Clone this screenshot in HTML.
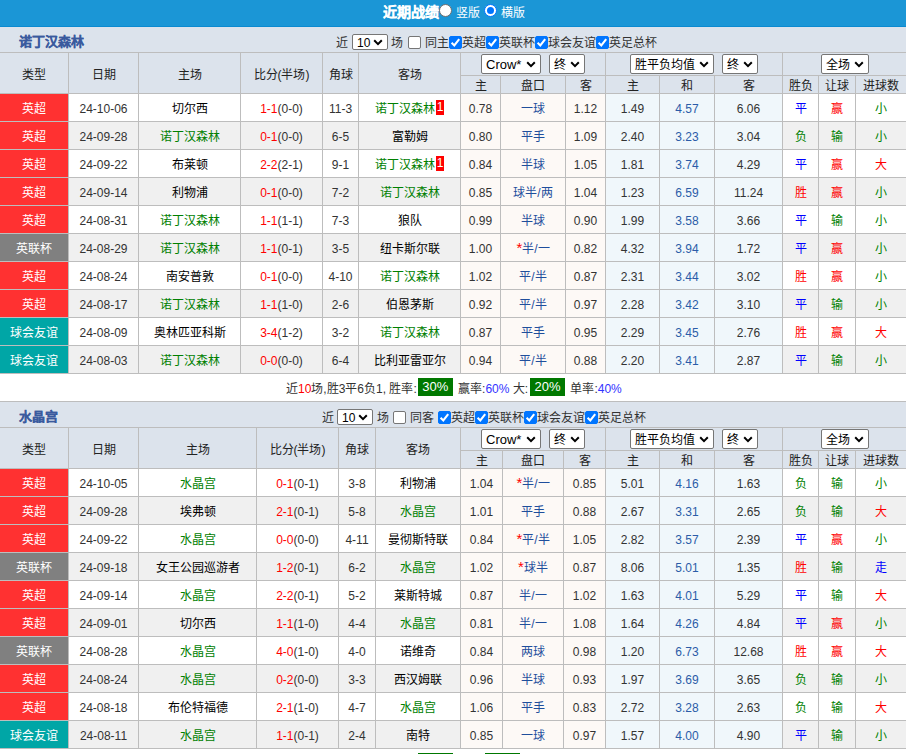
<!DOCTYPE html>
<html lang="zh-CN"><head><meta charset="utf-8"><title>近期战绩</title>
<style>
html,body{margin:0;padding:0;background:#fff;}
body{width:906px;height:754px;overflow:hidden;position:relative;font-family:"Liberation Sans", sans-serif;font-size:12px;}
body>div{position:absolute;box-sizing:border-box;}
.t{text-align:center;white-space:nowrap;}
.title{text-align:left;font-weight:bold;font-size:13px;color:#3a5a9e;-webkit-text-stroke:0.2px #3a5a9e}
.flag{display:inline-block;background:#f00;color:#fff;font-size:12px;line-height:15px;height:15px;width:8px;text-align:center;vertical-align:middle;position:relative;top:-2px;margin-left:1px}
.sel{background:#fff;border:1px solid #767676;border-radius:2px;box-sizing:content-box !important;color:#000;white-space:nowrap;text-align:left}
.sel .lab{position:absolute;left:4px;top:1px}
.sel .chev{position:absolute;right:4px;top:50%;margin-top:-3.5px}
.cb{width:13px;height:13px;background:#fff;border:1px solid #767676;border-radius:2px;}
.cb.on{background:#0075ff;border-color:#0075ff;}
.cb svg{position:absolute;left:-1px;top:-1px}
.radio{width:13px;height:13px;border-radius:50%;background:#fff;border:1px solid #6f6f6f;}
.radio.on{background:#fff;border:1px solid #0075ff;}
.radio.on div{position:absolute;left:2px;top:2px;width:7px;height:7px;border-radius:50%;background:#0075ff}
.gbox{display:inline-block;background:#007800;color:#fff;width:35px;height:18px;line-height:18px;text-align:center;font-size:13px;vertical-align:middle;margin:0 2px 0 1px;position:relative;top:-3px}
</style></head><body>
<div style="left:0px;top:0px;width:906px;height:26px;background:#1b96d6;"></div>
<div style="left:0px;top:26px;width:906px;height:1px;background:#0b8ad0;"></div>
<div class="t" style="left:383px;top:0px;height:26px;line-height:24px;color:#fff;font-weight:bold;font-size:14px;-webkit-text-stroke:0.2px #fff">近期战绩</div>
<div class="radio" style="left:439px;top:4px"></div>
<div class="t" style="left:456px;top:1px;height:26px;line-height:24px;color:#fff">竖版</div>
<div class="radio on" style="left:484px;top:4px"><div></div></div>
<div class="t" style="left:501px;top:1px;height:26px;line-height:24px;color:#fff">横版</div>
<div style="left:0px;top:27px;width:906px;height:25px;background:#dce3ec;"></div>
<div class="t title" style="left:19px;top:29px;height:25px;line-height:25px;">诺丁汉森林</div>
<div class="t" style="left:336px;top:31px;height:25px;line-height:25px;color:#333">近</div>
<div class="sel" style="left:352px;top:34px;width:34px;height:14px;line-height:14px;font-size:12px;"><span class="lab">10</span><svg class="chev" width="10" height="7" viewBox="0 0 10 7"><path d="M1.2 1.3 L5 5.1 L8.8 1.3" stroke="#000" stroke-width="2" fill="none"/></svg></div>
<div class="t" style="left:391px;top:31px;height:25px;line-height:25px;color:#333">场</div>
<div class="cb" style="left:408px;top:36px"></div>
<div class="t" style="left:425px;top:31px;height:25px;line-height:25px;color:#333">同主</div>
<div class="cb on" style="left:449px;top:36px"><svg width="13" height="13" viewBox="0 0 13 13"><path d="M2.6 6.8 L5.3 9.4 L10.2 3.2" stroke="#fff" stroke-width="2.1" fill="none"/></svg></div>
<div class="t" style="left:462px;top:31px;height:25px;line-height:25px;color:#333">英超</div>
<div class="cb on" style="left:486px;top:36px"><svg width="13" height="13" viewBox="0 0 13 13"><path d="M2.6 6.8 L5.3 9.4 L10.2 3.2" stroke="#fff" stroke-width="2.1" fill="none"/></svg></div>
<div class="t" style="left:499px;top:31px;height:25px;line-height:25px;color:#333">英联杯</div>
<div class="cb on" style="left:535px;top:36px"><svg width="13" height="13" viewBox="0 0 13 13"><path d="M2.6 6.8 L5.3 9.4 L10.2 3.2" stroke="#fff" stroke-width="2.1" fill="none"/></svg></div>
<div class="t" style="left:548px;top:31px;height:25px;line-height:25px;color:#333">球会友谊</div>
<div class="cb on" style="left:596px;top:36px"><svg width="13" height="13" viewBox="0 0 13 13"><path d="M2.6 6.8 L5.3 9.4 L10.2 3.2" stroke="#fff" stroke-width="2.1" fill="none"/></svg></div>
<div class="t" style="left:609px;top:31px;height:25px;line-height:25px;color:#333">英足总杯</div>
<div style="left:0px;top:52px;width:906px;height:41px;background:#dce3ec;"></div>
<div style="left:0px;top:94px;width:906px;height:27px;background:#ffffff;"></div>
<div style="left:461px;top:94px;width:144px;height:27px;background:#fdf9f6;"></div>
<div style="left:606px;top:94px;width:176px;height:27px;background:#f0f7fb;"></div>
<div style="left:0px;top:94px;width:68px;height:27px;background:#ff3131;"></div>
<div style="left:0px;top:122px;width:906px;height:27px;background:#f0f0f0;"></div>
<div style="left:461px;top:122px;width:144px;height:27px;background:#fdf9f6;"></div>
<div style="left:606px;top:122px;width:176px;height:27px;background:#f0f7fb;"></div>
<div style="left:0px;top:122px;width:68px;height:27px;background:#ff3131;"></div>
<div style="left:0px;top:150px;width:906px;height:27px;background:#ffffff;"></div>
<div style="left:461px;top:150px;width:144px;height:27px;background:#fdf9f6;"></div>
<div style="left:606px;top:150px;width:176px;height:27px;background:#f0f7fb;"></div>
<div style="left:0px;top:150px;width:68px;height:27px;background:#ff3131;"></div>
<div style="left:0px;top:178px;width:906px;height:27px;background:#f0f0f0;"></div>
<div style="left:461px;top:178px;width:144px;height:27px;background:#fdf9f6;"></div>
<div style="left:606px;top:178px;width:176px;height:27px;background:#f0f7fb;"></div>
<div style="left:0px;top:178px;width:68px;height:27px;background:#ff3131;"></div>
<div style="left:0px;top:206px;width:906px;height:27px;background:#ffffff;"></div>
<div style="left:461px;top:206px;width:144px;height:27px;background:#fdf9f6;"></div>
<div style="left:606px;top:206px;width:176px;height:27px;background:#f0f7fb;"></div>
<div style="left:0px;top:206px;width:68px;height:27px;background:#ff3131;"></div>
<div style="left:0px;top:234px;width:906px;height:27px;background:#f0f0f0;"></div>
<div style="left:461px;top:234px;width:144px;height:27px;background:#fdf9f6;"></div>
<div style="left:606px;top:234px;width:176px;height:27px;background:#f0f7fb;"></div>
<div style="left:0px;top:234px;width:68px;height:27px;background:#808080;"></div>
<div style="left:0px;top:262px;width:906px;height:27px;background:#ffffff;"></div>
<div style="left:461px;top:262px;width:144px;height:27px;background:#fdf9f6;"></div>
<div style="left:606px;top:262px;width:176px;height:27px;background:#f0f7fb;"></div>
<div style="left:0px;top:262px;width:68px;height:27px;background:#ff3131;"></div>
<div style="left:0px;top:290px;width:906px;height:27px;background:#f0f0f0;"></div>
<div style="left:461px;top:290px;width:144px;height:27px;background:#fdf9f6;"></div>
<div style="left:606px;top:290px;width:176px;height:27px;background:#f0f7fb;"></div>
<div style="left:0px;top:290px;width:68px;height:27px;background:#ff3131;"></div>
<div style="left:0px;top:318px;width:906px;height:27px;background:#ffffff;"></div>
<div style="left:461px;top:318px;width:144px;height:27px;background:#fdf9f6;"></div>
<div style="left:606px;top:318px;width:176px;height:27px;background:#f0f7fb;"></div>
<div style="left:0px;top:318px;width:68px;height:27px;background:#00a6a6;"></div>
<div style="left:0px;top:346px;width:906px;height:27px;background:#f0f0f0;"></div>
<div style="left:461px;top:346px;width:144px;height:27px;background:#fdf9f6;"></div>
<div style="left:606px;top:346px;width:176px;height:27px;background:#f0f7fb;"></div>
<div style="left:0px;top:346px;width:68px;height:27px;background:#00a6a6;"></div>
<div style="left:0px;top:52px;width:906px;height:1px;background:#bdbdbd;"></div>
<div style="left:460px;top:75px;width:446px;height:1px;background:#bdbdbd;"></div>
<div style="left:0px;top:93px;width:906px;height:1px;background:#bdbdbd;"></div>
<div style="left:0px;top:121px;width:906px;height:1px;background:#bdbdbd;"></div>
<div style="left:0px;top:149px;width:906px;height:1px;background:#bdbdbd;"></div>
<div style="left:0px;top:177px;width:906px;height:1px;background:#bdbdbd;"></div>
<div style="left:0px;top:205px;width:906px;height:1px;background:#bdbdbd;"></div>
<div style="left:0px;top:233px;width:906px;height:1px;background:#bdbdbd;"></div>
<div style="left:0px;top:261px;width:906px;height:1px;background:#bdbdbd;"></div>
<div style="left:0px;top:289px;width:906px;height:1px;background:#bdbdbd;"></div>
<div style="left:0px;top:317px;width:906px;height:1px;background:#bdbdbd;"></div>
<div style="left:0px;top:345px;width:906px;height:1px;background:#bdbdbd;"></div>
<div style="left:0px;top:373px;width:906px;height:1px;background:#bdbdbd;"></div>
<div style="left:68px;top:52px;width:1px;height:321px;background:#bdbdbd;"></div>
<div style="left:138px;top:52px;width:1px;height:321px;background:#bdbdbd;"></div>
<div style="left:240px;top:52px;width:1px;height:321px;background:#bdbdbd;"></div>
<div style="left:322px;top:52px;width:1px;height:321px;background:#bdbdbd;"></div>
<div style="left:358px;top:52px;width:1px;height:321px;background:#bdbdbd;"></div>
<div style="left:460px;top:52px;width:1px;height:321px;background:#bdbdbd;"></div>
<div style="left:500px;top:75px;width:1px;height:298px;background:#bdbdbd;"></div>
<div style="left:565px;top:75px;width:1px;height:298px;background:#bdbdbd;"></div>
<div style="left:605px;top:52px;width:1px;height:321px;background:#bdbdbd;"></div>
<div style="left:659px;top:75px;width:1px;height:298px;background:#bdbdbd;"></div>
<div style="left:714px;top:75px;width:1px;height:298px;background:#bdbdbd;"></div>
<div style="left:782px;top:52px;width:1px;height:321px;background:#bdbdbd;"></div>
<div style="left:818px;top:75px;width:1px;height:298px;background:#bdbdbd;"></div>
<div style="left:855px;top:75px;width:1px;height:298px;background:#bdbdbd;"></div>
<div class="t" style="left:0px;top:55px;width:68px;height:40px;line-height:40px;color:#222;">类型</div>
<div class="t" style="left:69px;top:55px;width:69px;height:40px;line-height:40px;color:#222;">日期</div>
<div class="t" style="left:139px;top:55px;width:101px;height:40px;line-height:40px;color:#222;">主场</div>
<div class="t" style="left:241px;top:55px;width:81px;height:40px;line-height:40px;color:#222;">比分(半场)</div>
<div class="t" style="left:323px;top:55px;width:35px;height:40px;line-height:40px;color:#222;">角球</div>
<div class="t" style="left:359px;top:55px;width:101px;height:40px;line-height:40px;color:#222;">客场</div>
<div class="t" style="left:461px;top:78px;width:39px;height:17px;line-height:17px;color:#222;">主</div>
<div class="t" style="left:501px;top:78px;width:64px;height:17px;line-height:17px;color:#222;">盘口</div>
<div class="t" style="left:566px;top:78px;width:39px;height:17px;line-height:17px;color:#222;">客</div>
<div class="t" style="left:606px;top:78px;width:53px;height:17px;line-height:17px;color:#222;">主</div>
<div class="t" style="left:660px;top:78px;width:54px;height:17px;line-height:17px;color:#222;">和</div>
<div class="t" style="left:715px;top:78px;width:67px;height:17px;line-height:17px;color:#222;">客</div>
<div class="t" style="left:783px;top:78px;width:35px;height:17px;line-height:17px;color:#222;">胜负</div>
<div class="t" style="left:819px;top:78px;width:36px;height:17px;line-height:17px;color:#222;">让球</div>
<div class="t" style="left:856px;top:78px;width:50px;height:17px;line-height:17px;color:#222;">进球数</div>
<div class="t" style="left:0px;top:96px;width:68px;height:27px;line-height:27px;color:#fff;">英超</div>
<div class="t" style="left:69px;top:96px;width:69px;height:27px;line-height:27px;color:#333;">24-10-06</div>
<div class="t" style="left:139px;top:96px;width:101px;height:27px;line-height:27px;color:#333;"><span style="color:#000">切尔西</span></div>
<div class="t" style="left:241px;top:96px;width:81px;height:27px;line-height:27px;color:#333;"><span style="color:#ff0000">1-1</span>(0-0)</div>
<div class="t" style="left:323px;top:96px;width:35px;height:27px;line-height:27px;color:#333;">11-3</div>
<div class="t" style="left:359px;top:96px;width:101px;height:27px;line-height:27px;color:#333;"><span style="color:#008000">诺丁汉森林</span><span class="flag">1</span></div>
<div class="t" style="left:461px;top:96px;width:39px;height:27px;line-height:27px;color:#333;">0.78</div>
<div class="t" style="left:501px;top:96px;width:64px;height:27px;line-height:27px;color:#1f4e9c;">一球</div>
<div class="t" style="left:566px;top:96px;width:39px;height:27px;line-height:27px;color:#333;">1.12</div>
<div class="t" style="left:606px;top:96px;width:53px;height:27px;line-height:27px;color:#333;">1.49</div>
<div class="t" style="left:660px;top:96px;width:54px;height:27px;line-height:27px;color:#2b5ca8;">4.57</div>
<div class="t" style="left:715px;top:96px;width:67px;height:27px;line-height:27px;color:#333;">6.06</div>
<div class="t" style="left:783px;top:96px;width:35px;height:27px;line-height:27px;color:#0000ff;">平</div>
<div class="t" style="left:819px;top:96px;width:36px;height:27px;line-height:27px;color:#ff0000;">赢</div>
<div class="t" style="left:856px;top:96px;width:50px;height:27px;line-height:27px;color:#008000;">小</div>
<div class="t" style="left:0px;top:124px;width:68px;height:27px;line-height:27px;color:#fff;">英超</div>
<div class="t" style="left:69px;top:124px;width:69px;height:27px;line-height:27px;color:#333;">24-09-28</div>
<div class="t" style="left:139px;top:124px;width:101px;height:27px;line-height:27px;color:#333;"><span style="color:#008000">诺丁汉森林</span></div>
<div class="t" style="left:241px;top:124px;width:81px;height:27px;line-height:27px;color:#333;"><span style="color:#ff0000">0-1</span>(0-0)</div>
<div class="t" style="left:323px;top:124px;width:35px;height:27px;line-height:27px;color:#333;">6-5</div>
<div class="t" style="left:359px;top:124px;width:101px;height:27px;line-height:27px;color:#333;"><span style="color:#000">富勒姆</span></div>
<div class="t" style="left:461px;top:124px;width:39px;height:27px;line-height:27px;color:#333;">0.80</div>
<div class="t" style="left:501px;top:124px;width:64px;height:27px;line-height:27px;color:#1f4e9c;">平手</div>
<div class="t" style="left:566px;top:124px;width:39px;height:27px;line-height:27px;color:#333;">1.09</div>
<div class="t" style="left:606px;top:124px;width:53px;height:27px;line-height:27px;color:#333;">2.40</div>
<div class="t" style="left:660px;top:124px;width:54px;height:27px;line-height:27px;color:#2b5ca8;">3.23</div>
<div class="t" style="left:715px;top:124px;width:67px;height:27px;line-height:27px;color:#333;">3.04</div>
<div class="t" style="left:783px;top:124px;width:35px;height:27px;line-height:27px;color:#008000;">负</div>
<div class="t" style="left:819px;top:124px;width:36px;height:27px;line-height:27px;color:#008000;">输</div>
<div class="t" style="left:856px;top:124px;width:50px;height:27px;line-height:27px;color:#008000;">小</div>
<div class="t" style="left:0px;top:152px;width:68px;height:27px;line-height:27px;color:#fff;">英超</div>
<div class="t" style="left:69px;top:152px;width:69px;height:27px;line-height:27px;color:#333;">24-09-22</div>
<div class="t" style="left:139px;top:152px;width:101px;height:27px;line-height:27px;color:#333;"><span style="color:#000">布莱顿</span></div>
<div class="t" style="left:241px;top:152px;width:81px;height:27px;line-height:27px;color:#333;"><span style="color:#ff0000">2-2</span>(2-1)</div>
<div class="t" style="left:323px;top:152px;width:35px;height:27px;line-height:27px;color:#333;">9-1</div>
<div class="t" style="left:359px;top:152px;width:101px;height:27px;line-height:27px;color:#333;"><span style="color:#008000">诺丁汉森林</span><span class="flag">1</span></div>
<div class="t" style="left:461px;top:152px;width:39px;height:27px;line-height:27px;color:#333;">0.84</div>
<div class="t" style="left:501px;top:152px;width:64px;height:27px;line-height:27px;color:#1f4e9c;">半球</div>
<div class="t" style="left:566px;top:152px;width:39px;height:27px;line-height:27px;color:#333;">1.05</div>
<div class="t" style="left:606px;top:152px;width:53px;height:27px;line-height:27px;color:#333;">1.81</div>
<div class="t" style="left:660px;top:152px;width:54px;height:27px;line-height:27px;color:#2b5ca8;">3.74</div>
<div class="t" style="left:715px;top:152px;width:67px;height:27px;line-height:27px;color:#333;">4.29</div>
<div class="t" style="left:783px;top:152px;width:35px;height:27px;line-height:27px;color:#0000ff;">平</div>
<div class="t" style="left:819px;top:152px;width:36px;height:27px;line-height:27px;color:#ff0000;">赢</div>
<div class="t" style="left:856px;top:152px;width:50px;height:27px;line-height:27px;color:#ff0000;">大</div>
<div class="t" style="left:0px;top:180px;width:68px;height:27px;line-height:27px;color:#fff;">英超</div>
<div class="t" style="left:69px;top:180px;width:69px;height:27px;line-height:27px;color:#333;">24-09-14</div>
<div class="t" style="left:139px;top:180px;width:101px;height:27px;line-height:27px;color:#333;"><span style="color:#000">利物浦</span></div>
<div class="t" style="left:241px;top:180px;width:81px;height:27px;line-height:27px;color:#333;"><span style="color:#ff0000">0-1</span>(0-0)</div>
<div class="t" style="left:323px;top:180px;width:35px;height:27px;line-height:27px;color:#333;">7-2</div>
<div class="t" style="left:359px;top:180px;width:101px;height:27px;line-height:27px;color:#333;"><span style="color:#008000">诺丁汉森林</span></div>
<div class="t" style="left:461px;top:180px;width:39px;height:27px;line-height:27px;color:#333;">0.85</div>
<div class="t" style="left:501px;top:180px;width:64px;height:27px;line-height:27px;color:#1f4e9c;">球半/两</div>
<div class="t" style="left:566px;top:180px;width:39px;height:27px;line-height:27px;color:#333;">1.04</div>
<div class="t" style="left:606px;top:180px;width:53px;height:27px;line-height:27px;color:#333;">1.23</div>
<div class="t" style="left:660px;top:180px;width:54px;height:27px;line-height:27px;color:#2b5ca8;">6.59</div>
<div class="t" style="left:715px;top:180px;width:67px;height:27px;line-height:27px;color:#333;">11.24</div>
<div class="t" style="left:783px;top:180px;width:35px;height:27px;line-height:27px;color:#ff0000;">胜</div>
<div class="t" style="left:819px;top:180px;width:36px;height:27px;line-height:27px;color:#ff0000;">赢</div>
<div class="t" style="left:856px;top:180px;width:50px;height:27px;line-height:27px;color:#008000;">小</div>
<div class="t" style="left:0px;top:208px;width:68px;height:27px;line-height:27px;color:#fff;">英超</div>
<div class="t" style="left:69px;top:208px;width:69px;height:27px;line-height:27px;color:#333;">24-08-31</div>
<div class="t" style="left:139px;top:208px;width:101px;height:27px;line-height:27px;color:#333;"><span style="color:#008000">诺丁汉森林</span></div>
<div class="t" style="left:241px;top:208px;width:81px;height:27px;line-height:27px;color:#333;"><span style="color:#ff0000">1-1</span>(1-1)</div>
<div class="t" style="left:323px;top:208px;width:35px;height:27px;line-height:27px;color:#333;">7-3</div>
<div class="t" style="left:359px;top:208px;width:101px;height:27px;line-height:27px;color:#333;"><span style="color:#000">狼队</span></div>
<div class="t" style="left:461px;top:208px;width:39px;height:27px;line-height:27px;color:#333;">0.99</div>
<div class="t" style="left:501px;top:208px;width:64px;height:27px;line-height:27px;color:#1f4e9c;">半球</div>
<div class="t" style="left:566px;top:208px;width:39px;height:27px;line-height:27px;color:#333;">0.90</div>
<div class="t" style="left:606px;top:208px;width:53px;height:27px;line-height:27px;color:#333;">1.99</div>
<div class="t" style="left:660px;top:208px;width:54px;height:27px;line-height:27px;color:#2b5ca8;">3.58</div>
<div class="t" style="left:715px;top:208px;width:67px;height:27px;line-height:27px;color:#333;">3.66</div>
<div class="t" style="left:783px;top:208px;width:35px;height:27px;line-height:27px;color:#0000ff;">平</div>
<div class="t" style="left:819px;top:208px;width:36px;height:27px;line-height:27px;color:#008000;">输</div>
<div class="t" style="left:856px;top:208px;width:50px;height:27px;line-height:27px;color:#008000;">小</div>
<div class="t" style="left:0px;top:236px;width:68px;height:27px;line-height:27px;color:#fff;">英联杯</div>
<div class="t" style="left:69px;top:236px;width:69px;height:27px;line-height:27px;color:#333;">24-08-29</div>
<div class="t" style="left:139px;top:236px;width:101px;height:27px;line-height:27px;color:#333;"><span style="color:#008000">诺丁汉森林</span></div>
<div class="t" style="left:241px;top:236px;width:81px;height:27px;line-height:27px;color:#333;"><span style="color:#ff0000">1-1</span>(0-1)</div>
<div class="t" style="left:323px;top:236px;width:35px;height:27px;line-height:27px;color:#333;">3-5</div>
<div class="t" style="left:359px;top:236px;width:101px;height:27px;line-height:27px;color:#333;"><span style="color:#000">纽卡斯尔联</span></div>
<div class="t" style="left:461px;top:236px;width:39px;height:27px;line-height:27px;color:#333;">1.00</div>
<div class="t" style="left:501px;top:236px;width:64px;height:27px;line-height:27px;color:#1f4e9c;"><span style="color:#ff0000;font-size:15px;line-height:10px">*</span>半/一</div>
<div class="t" style="left:566px;top:236px;width:39px;height:27px;line-height:27px;color:#333;">0.82</div>
<div class="t" style="left:606px;top:236px;width:53px;height:27px;line-height:27px;color:#333;">4.32</div>
<div class="t" style="left:660px;top:236px;width:54px;height:27px;line-height:27px;color:#2b5ca8;">3.94</div>
<div class="t" style="left:715px;top:236px;width:67px;height:27px;line-height:27px;color:#333;">1.72</div>
<div class="t" style="left:783px;top:236px;width:35px;height:27px;line-height:27px;color:#0000ff;">平</div>
<div class="t" style="left:819px;top:236px;width:36px;height:27px;line-height:27px;color:#ff0000;">赢</div>
<div class="t" style="left:856px;top:236px;width:50px;height:27px;line-height:27px;color:#008000;">小</div>
<div class="t" style="left:0px;top:264px;width:68px;height:27px;line-height:27px;color:#fff;">英超</div>
<div class="t" style="left:69px;top:264px;width:69px;height:27px;line-height:27px;color:#333;">24-08-24</div>
<div class="t" style="left:139px;top:264px;width:101px;height:27px;line-height:27px;color:#333;"><span style="color:#000">南安普敦</span></div>
<div class="t" style="left:241px;top:264px;width:81px;height:27px;line-height:27px;color:#333;"><span style="color:#ff0000">0-1</span>(0-0)</div>
<div class="t" style="left:323px;top:264px;width:35px;height:27px;line-height:27px;color:#333;">4-10</div>
<div class="t" style="left:359px;top:264px;width:101px;height:27px;line-height:27px;color:#333;"><span style="color:#008000">诺丁汉森林</span></div>
<div class="t" style="left:461px;top:264px;width:39px;height:27px;line-height:27px;color:#333;">1.02</div>
<div class="t" style="left:501px;top:264px;width:64px;height:27px;line-height:27px;color:#1f4e9c;">平/半</div>
<div class="t" style="left:566px;top:264px;width:39px;height:27px;line-height:27px;color:#333;">0.87</div>
<div class="t" style="left:606px;top:264px;width:53px;height:27px;line-height:27px;color:#333;">2.31</div>
<div class="t" style="left:660px;top:264px;width:54px;height:27px;line-height:27px;color:#2b5ca8;">3.44</div>
<div class="t" style="left:715px;top:264px;width:67px;height:27px;line-height:27px;color:#333;">3.02</div>
<div class="t" style="left:783px;top:264px;width:35px;height:27px;line-height:27px;color:#ff0000;">胜</div>
<div class="t" style="left:819px;top:264px;width:36px;height:27px;line-height:27px;color:#ff0000;">赢</div>
<div class="t" style="left:856px;top:264px;width:50px;height:27px;line-height:27px;color:#008000;">小</div>
<div class="t" style="left:0px;top:292px;width:68px;height:27px;line-height:27px;color:#fff;">英超</div>
<div class="t" style="left:69px;top:292px;width:69px;height:27px;line-height:27px;color:#333;">24-08-17</div>
<div class="t" style="left:139px;top:292px;width:101px;height:27px;line-height:27px;color:#333;"><span style="color:#008000">诺丁汉森林</span></div>
<div class="t" style="left:241px;top:292px;width:81px;height:27px;line-height:27px;color:#333;"><span style="color:#ff0000">1-1</span>(1-0)</div>
<div class="t" style="left:323px;top:292px;width:35px;height:27px;line-height:27px;color:#333;">2-6</div>
<div class="t" style="left:359px;top:292px;width:101px;height:27px;line-height:27px;color:#333;"><span style="color:#000">伯恩茅斯</span></div>
<div class="t" style="left:461px;top:292px;width:39px;height:27px;line-height:27px;color:#333;">0.92</div>
<div class="t" style="left:501px;top:292px;width:64px;height:27px;line-height:27px;color:#1f4e9c;">平/半</div>
<div class="t" style="left:566px;top:292px;width:39px;height:27px;line-height:27px;color:#333;">0.97</div>
<div class="t" style="left:606px;top:292px;width:53px;height:27px;line-height:27px;color:#333;">2.28</div>
<div class="t" style="left:660px;top:292px;width:54px;height:27px;line-height:27px;color:#2b5ca8;">3.42</div>
<div class="t" style="left:715px;top:292px;width:67px;height:27px;line-height:27px;color:#333;">3.10</div>
<div class="t" style="left:783px;top:292px;width:35px;height:27px;line-height:27px;color:#0000ff;">平</div>
<div class="t" style="left:819px;top:292px;width:36px;height:27px;line-height:27px;color:#008000;">输</div>
<div class="t" style="left:856px;top:292px;width:50px;height:27px;line-height:27px;color:#008000;">小</div>
<div class="t" style="left:0px;top:320px;width:68px;height:27px;line-height:27px;color:#fff;">球会友谊</div>
<div class="t" style="left:69px;top:320px;width:69px;height:27px;line-height:27px;color:#333;">24-08-09</div>
<div class="t" style="left:139px;top:320px;width:101px;height:27px;line-height:27px;color:#333;"><span style="color:#000">奥林匹亚科斯</span></div>
<div class="t" style="left:241px;top:320px;width:81px;height:27px;line-height:27px;color:#333;"><span style="color:#ff0000">3-4</span>(1-2)</div>
<div class="t" style="left:323px;top:320px;width:35px;height:27px;line-height:27px;color:#333;">3-2</div>
<div class="t" style="left:359px;top:320px;width:101px;height:27px;line-height:27px;color:#333;"><span style="color:#008000">诺丁汉森林</span></div>
<div class="t" style="left:461px;top:320px;width:39px;height:27px;line-height:27px;color:#333;">0.87</div>
<div class="t" style="left:501px;top:320px;width:64px;height:27px;line-height:27px;color:#1f4e9c;">平手</div>
<div class="t" style="left:566px;top:320px;width:39px;height:27px;line-height:27px;color:#333;">0.95</div>
<div class="t" style="left:606px;top:320px;width:53px;height:27px;line-height:27px;color:#333;">2.29</div>
<div class="t" style="left:660px;top:320px;width:54px;height:27px;line-height:27px;color:#2b5ca8;">3.45</div>
<div class="t" style="left:715px;top:320px;width:67px;height:27px;line-height:27px;color:#333;">2.76</div>
<div class="t" style="left:783px;top:320px;width:35px;height:27px;line-height:27px;color:#ff0000;">胜</div>
<div class="t" style="left:819px;top:320px;width:36px;height:27px;line-height:27px;color:#ff0000;">赢</div>
<div class="t" style="left:856px;top:320px;width:50px;height:27px;line-height:27px;color:#ff0000;">大</div>
<div class="t" style="left:0px;top:348px;width:68px;height:27px;line-height:27px;color:#fff;">球会友谊</div>
<div class="t" style="left:69px;top:348px;width:69px;height:27px;line-height:27px;color:#333;">24-08-03</div>
<div class="t" style="left:139px;top:348px;width:101px;height:27px;line-height:27px;color:#333;"><span style="color:#008000">诺丁汉森林</span></div>
<div class="t" style="left:241px;top:348px;width:81px;height:27px;line-height:27px;color:#333;"><span style="color:#ff0000">0-0</span>(0-0)</div>
<div class="t" style="left:323px;top:348px;width:35px;height:27px;line-height:27px;color:#333;">6-4</div>
<div class="t" style="left:359px;top:348px;width:101px;height:27px;line-height:27px;color:#333;"><span style="color:#000">比利亚雷亚尔</span></div>
<div class="t" style="left:461px;top:348px;width:39px;height:27px;line-height:27px;color:#333;">0.94</div>
<div class="t" style="left:501px;top:348px;width:64px;height:27px;line-height:27px;color:#1f4e9c;">平/半</div>
<div class="t" style="left:566px;top:348px;width:39px;height:27px;line-height:27px;color:#333;">0.88</div>
<div class="t" style="left:606px;top:348px;width:53px;height:27px;line-height:27px;color:#333;">2.20</div>
<div class="t" style="left:660px;top:348px;width:54px;height:27px;line-height:27px;color:#2b5ca8;">3.41</div>
<div class="t" style="left:715px;top:348px;width:67px;height:27px;line-height:27px;color:#333;">2.87</div>
<div class="t" style="left:783px;top:348px;width:35px;height:27px;line-height:27px;color:#0000ff;">平</div>
<div class="t" style="left:819px;top:348px;width:36px;height:27px;line-height:27px;color:#008000;">输</div>
<div class="t" style="left:856px;top:348px;width:50px;height:27px;line-height:27px;color:#008000;">小</div>
<div class="sel" style="left:481px;top:54px;width:58px;height:18px;line-height:18px;font-size:13px;"><span class="lab">Crow*</span><svg class="chev" width="10" height="7" viewBox="0 0 10 7"><path d="M1.2 1.3 L5 5.1 L8.8 1.3" stroke="#000" stroke-width="2" fill="none"/></svg></div>
<div class="sel" style="left:549px;top:54px;width:34px;height:18px;line-height:18px;font-size:12px;"><span class="lab">终</span><svg class="chev" width="10" height="7" viewBox="0 0 10 7"><path d="M1.2 1.3 L5 5.1 L8.8 1.3" stroke="#000" stroke-width="2" fill="none"/></svg></div>
<div class="sel" style="left:630px;top:54px;width:82px;height:18px;line-height:18px;font-size:12px;"><span class="lab">胜平负均值</span><svg class="chev" width="10" height="7" viewBox="0 0 10 7"><path d="M1.2 1.3 L5 5.1 L8.8 1.3" stroke="#000" stroke-width="2" fill="none"/></svg></div>
<div class="sel" style="left:722px;top:54px;width:34px;height:18px;line-height:18px;font-size:12px;"><span class="lab">终</span><svg class="chev" width="10" height="7" viewBox="0 0 10 7"><path d="M1.2 1.3 L5 5.1 L8.8 1.3" stroke="#000" stroke-width="2" fill="none"/></svg></div>
<div class="sel" style="left:821px;top:54px;width:46px;height:18px;line-height:18px;font-size:12px;"><span class="lab">全场</span><svg class="chev" width="10" height="7" viewBox="0 0 10 7"><path d="M1.2 1.3 L5 5.1 L8.8 1.3" stroke="#000" stroke-width="2" fill="none"/></svg></div>
<div class="t" style="left:286px;top:376px;height:27px;line-height:27px;color:#333">近<span style="color:#f00">10</span>场,胜3平6负1, 胜率:<span class="gbox">30%</span> 赢率:<span style="color:#3333ff">60%</span> 大:<span class="gbox" style="margin-left:2px">20%</span> 单率:<span style="color:#3333ff">40%</span></div>
<div style="left:0px;top:401px;width:906px;height:1px;background:#bdbdbd;"></div>
<div style="left:0px;top:402px;width:906px;height:25px;background:#dce3ec;"></div>
<div class="t title" style="left:19px;top:404px;height:25px;line-height:25px;">水晶宫</div>
<div class="t" style="left:322px;top:406px;height:25px;line-height:25px;color:#333">近</div>
<div class="sel" style="left:337px;top:409px;width:34px;height:14px;line-height:14px;font-size:12px;"><span class="lab">10</span><svg class="chev" width="10" height="7" viewBox="0 0 10 7"><path d="M1.2 1.3 L5 5.1 L8.8 1.3" stroke="#000" stroke-width="2" fill="none"/></svg></div>
<div class="t" style="left:377px;top:406px;height:25px;line-height:25px;color:#333">场</div>
<div class="cb" style="left:393px;top:411px"></div>
<div class="t" style="left:410px;top:406px;height:25px;line-height:25px;color:#333">同客</div>
<div class="cb on" style="left:438px;top:411px"><svg width="13" height="13" viewBox="0 0 13 13"><path d="M2.6 6.8 L5.3 9.4 L10.2 3.2" stroke="#fff" stroke-width="2.1" fill="none"/></svg></div>
<div class="t" style="left:451px;top:406px;height:25px;line-height:25px;color:#333">英超</div>
<div class="cb on" style="left:475px;top:411px"><svg width="13" height="13" viewBox="0 0 13 13"><path d="M2.6 6.8 L5.3 9.4 L10.2 3.2" stroke="#fff" stroke-width="2.1" fill="none"/></svg></div>
<div class="t" style="left:488px;top:406px;height:25px;line-height:25px;color:#333">英联杯</div>
<div class="cb on" style="left:524px;top:411px"><svg width="13" height="13" viewBox="0 0 13 13"><path d="M2.6 6.8 L5.3 9.4 L10.2 3.2" stroke="#fff" stroke-width="2.1" fill="none"/></svg></div>
<div class="t" style="left:537px;top:406px;height:25px;line-height:25px;color:#333">球会友谊</div>
<div class="cb on" style="left:585px;top:411px"><svg width="13" height="13" viewBox="0 0 13 13"><path d="M2.6 6.8 L5.3 9.4 L10.2 3.2" stroke="#fff" stroke-width="2.1" fill="none"/></svg></div>
<div class="t" style="left:598px;top:406px;height:25px;line-height:25px;color:#333">英足总杯</div>
<div style="left:0px;top:427px;width:906px;height:41px;background:#dce3ec;"></div>
<div style="left:0px;top:469px;width:906px;height:27px;background:#ffffff;"></div>
<div style="left:461px;top:469px;width:144px;height:27px;background:#fdf9f6;"></div>
<div style="left:606px;top:469px;width:176px;height:27px;background:#f0f7fb;"></div>
<div style="left:0px;top:469px;width:68px;height:27px;background:#ff3131;"></div>
<div style="left:0px;top:497px;width:906px;height:27px;background:#f0f0f0;"></div>
<div style="left:461px;top:497px;width:144px;height:27px;background:#fdf9f6;"></div>
<div style="left:606px;top:497px;width:176px;height:27px;background:#f0f7fb;"></div>
<div style="left:0px;top:497px;width:68px;height:27px;background:#ff3131;"></div>
<div style="left:0px;top:525px;width:906px;height:27px;background:#ffffff;"></div>
<div style="left:461px;top:525px;width:144px;height:27px;background:#fdf9f6;"></div>
<div style="left:606px;top:525px;width:176px;height:27px;background:#f0f7fb;"></div>
<div style="left:0px;top:525px;width:68px;height:27px;background:#ff3131;"></div>
<div style="left:0px;top:553px;width:906px;height:27px;background:#f0f0f0;"></div>
<div style="left:461px;top:553px;width:144px;height:27px;background:#fdf9f6;"></div>
<div style="left:606px;top:553px;width:176px;height:27px;background:#f0f7fb;"></div>
<div style="left:0px;top:553px;width:68px;height:27px;background:#808080;"></div>
<div style="left:0px;top:581px;width:906px;height:27px;background:#ffffff;"></div>
<div style="left:461px;top:581px;width:144px;height:27px;background:#fdf9f6;"></div>
<div style="left:606px;top:581px;width:176px;height:27px;background:#f0f7fb;"></div>
<div style="left:0px;top:581px;width:68px;height:27px;background:#ff3131;"></div>
<div style="left:0px;top:609px;width:906px;height:27px;background:#f0f0f0;"></div>
<div style="left:461px;top:609px;width:144px;height:27px;background:#fdf9f6;"></div>
<div style="left:606px;top:609px;width:176px;height:27px;background:#f0f7fb;"></div>
<div style="left:0px;top:609px;width:68px;height:27px;background:#ff3131;"></div>
<div style="left:0px;top:637px;width:906px;height:27px;background:#ffffff;"></div>
<div style="left:461px;top:637px;width:144px;height:27px;background:#fdf9f6;"></div>
<div style="left:606px;top:637px;width:176px;height:27px;background:#f0f7fb;"></div>
<div style="left:0px;top:637px;width:68px;height:27px;background:#808080;"></div>
<div style="left:0px;top:665px;width:906px;height:27px;background:#f0f0f0;"></div>
<div style="left:461px;top:665px;width:144px;height:27px;background:#fdf9f6;"></div>
<div style="left:606px;top:665px;width:176px;height:27px;background:#f0f7fb;"></div>
<div style="left:0px;top:665px;width:68px;height:27px;background:#ff3131;"></div>
<div style="left:0px;top:693px;width:906px;height:27px;background:#ffffff;"></div>
<div style="left:461px;top:693px;width:144px;height:27px;background:#fdf9f6;"></div>
<div style="left:606px;top:693px;width:176px;height:27px;background:#f0f7fb;"></div>
<div style="left:0px;top:693px;width:68px;height:27px;background:#ff3131;"></div>
<div style="left:0px;top:721px;width:906px;height:27px;background:#f0f0f0;"></div>
<div style="left:461px;top:721px;width:144px;height:27px;background:#fdf9f6;"></div>
<div style="left:606px;top:721px;width:176px;height:27px;background:#f0f7fb;"></div>
<div style="left:0px;top:721px;width:68px;height:27px;background:#00a6a6;"></div>
<div style="left:0px;top:427px;width:906px;height:1px;background:#bdbdbd;"></div>
<div style="left:460px;top:450px;width:446px;height:1px;background:#bdbdbd;"></div>
<div style="left:0px;top:468px;width:906px;height:1px;background:#bdbdbd;"></div>
<div style="left:0px;top:496px;width:906px;height:1px;background:#bdbdbd;"></div>
<div style="left:0px;top:524px;width:906px;height:1px;background:#bdbdbd;"></div>
<div style="left:0px;top:552px;width:906px;height:1px;background:#bdbdbd;"></div>
<div style="left:0px;top:580px;width:906px;height:1px;background:#bdbdbd;"></div>
<div style="left:0px;top:608px;width:906px;height:1px;background:#bdbdbd;"></div>
<div style="left:0px;top:636px;width:906px;height:1px;background:#bdbdbd;"></div>
<div style="left:0px;top:664px;width:906px;height:1px;background:#bdbdbd;"></div>
<div style="left:0px;top:692px;width:906px;height:1px;background:#bdbdbd;"></div>
<div style="left:0px;top:720px;width:906px;height:1px;background:#bdbdbd;"></div>
<div style="left:0px;top:748px;width:906px;height:1px;background:#bdbdbd;"></div>
<div style="left:68px;top:427px;width:1px;height:321px;background:#bdbdbd;"></div>
<div style="left:138px;top:427px;width:1px;height:321px;background:#bdbdbd;"></div>
<div style="left:256px;top:427px;width:1px;height:321px;background:#bdbdbd;"></div>
<div style="left:338px;top:427px;width:1px;height:321px;background:#bdbdbd;"></div>
<div style="left:375px;top:427px;width:1px;height:321px;background:#bdbdbd;"></div>
<div style="left:460px;top:427px;width:1px;height:321px;background:#bdbdbd;"></div>
<div style="left:502px;top:450px;width:1px;height:298px;background:#bdbdbd;"></div>
<div style="left:563px;top:450px;width:1px;height:298px;background:#bdbdbd;"></div>
<div style="left:605px;top:427px;width:1px;height:321px;background:#bdbdbd;"></div>
<div style="left:659px;top:450px;width:1px;height:298px;background:#bdbdbd;"></div>
<div style="left:714px;top:450px;width:1px;height:298px;background:#bdbdbd;"></div>
<div style="left:782px;top:427px;width:1px;height:321px;background:#bdbdbd;"></div>
<div style="left:818px;top:450px;width:1px;height:298px;background:#bdbdbd;"></div>
<div style="left:855px;top:450px;width:1px;height:298px;background:#bdbdbd;"></div>
<div class="t" style="left:0px;top:430px;width:68px;height:40px;line-height:40px;color:#222;">类型</div>
<div class="t" style="left:69px;top:430px;width:69px;height:40px;line-height:40px;color:#222;">日期</div>
<div class="t" style="left:139px;top:430px;width:117px;height:40px;line-height:40px;color:#222;">主场</div>
<div class="t" style="left:257px;top:430px;width:81px;height:40px;line-height:40px;color:#222;">比分(半场)</div>
<div class="t" style="left:339px;top:430px;width:36px;height:40px;line-height:40px;color:#222;">角球</div>
<div class="t" style="left:376px;top:430px;width:84px;height:40px;line-height:40px;color:#222;">客场</div>
<div class="t" style="left:461px;top:453px;width:41px;height:17px;line-height:17px;color:#222;">主</div>
<div class="t" style="left:503px;top:453px;width:60px;height:17px;line-height:17px;color:#222;">盘口</div>
<div class="t" style="left:564px;top:453px;width:41px;height:17px;line-height:17px;color:#222;">客</div>
<div class="t" style="left:606px;top:453px;width:53px;height:17px;line-height:17px;color:#222;">主</div>
<div class="t" style="left:660px;top:453px;width:54px;height:17px;line-height:17px;color:#222;">和</div>
<div class="t" style="left:715px;top:453px;width:67px;height:17px;line-height:17px;color:#222;">客</div>
<div class="t" style="left:783px;top:453px;width:35px;height:17px;line-height:17px;color:#222;">胜负</div>
<div class="t" style="left:819px;top:453px;width:36px;height:17px;line-height:17px;color:#222;">让球</div>
<div class="t" style="left:856px;top:453px;width:50px;height:17px;line-height:17px;color:#222;">进球数</div>
<div class="t" style="left:0px;top:471px;width:68px;height:27px;line-height:27px;color:#fff;">英超</div>
<div class="t" style="left:69px;top:471px;width:69px;height:27px;line-height:27px;color:#333;">24-10-05</div>
<div class="t" style="left:139px;top:471px;width:117px;height:27px;line-height:27px;color:#333;"><span style="color:#008000">水晶宫</span></div>
<div class="t" style="left:257px;top:471px;width:81px;height:27px;line-height:27px;color:#333;"><span style="color:#ff0000">0-1</span>(0-1)</div>
<div class="t" style="left:339px;top:471px;width:36px;height:27px;line-height:27px;color:#333;">3-8</div>
<div class="t" style="left:376px;top:471px;width:84px;height:27px;line-height:27px;color:#333;"><span style="color:#000">利物浦</span></div>
<div class="t" style="left:461px;top:471px;width:41px;height:27px;line-height:27px;color:#333;">1.04</div>
<div class="t" style="left:503px;top:471px;width:60px;height:27px;line-height:27px;color:#1f4e9c;"><span style="color:#ff0000;font-size:15px;line-height:10px">*</span>半/一</div>
<div class="t" style="left:564px;top:471px;width:41px;height:27px;line-height:27px;color:#333;">0.85</div>
<div class="t" style="left:606px;top:471px;width:53px;height:27px;line-height:27px;color:#333;">5.01</div>
<div class="t" style="left:660px;top:471px;width:54px;height:27px;line-height:27px;color:#2b5ca8;">4.16</div>
<div class="t" style="left:715px;top:471px;width:67px;height:27px;line-height:27px;color:#333;">1.63</div>
<div class="t" style="left:783px;top:471px;width:35px;height:27px;line-height:27px;color:#008000;">负</div>
<div class="t" style="left:819px;top:471px;width:36px;height:27px;line-height:27px;color:#008000;">输</div>
<div class="t" style="left:856px;top:471px;width:50px;height:27px;line-height:27px;color:#008000;">小</div>
<div class="t" style="left:0px;top:499px;width:68px;height:27px;line-height:27px;color:#fff;">英超</div>
<div class="t" style="left:69px;top:499px;width:69px;height:27px;line-height:27px;color:#333;">24-09-28</div>
<div class="t" style="left:139px;top:499px;width:117px;height:27px;line-height:27px;color:#333;"><span style="color:#000">埃弗顿</span></div>
<div class="t" style="left:257px;top:499px;width:81px;height:27px;line-height:27px;color:#333;"><span style="color:#ff0000">2-1</span>(0-1)</div>
<div class="t" style="left:339px;top:499px;width:36px;height:27px;line-height:27px;color:#333;">5-8</div>
<div class="t" style="left:376px;top:499px;width:84px;height:27px;line-height:27px;color:#333;"><span style="color:#008000">水晶宫</span></div>
<div class="t" style="left:461px;top:499px;width:41px;height:27px;line-height:27px;color:#333;">1.01</div>
<div class="t" style="left:503px;top:499px;width:60px;height:27px;line-height:27px;color:#1f4e9c;">平手</div>
<div class="t" style="left:564px;top:499px;width:41px;height:27px;line-height:27px;color:#333;">0.88</div>
<div class="t" style="left:606px;top:499px;width:53px;height:27px;line-height:27px;color:#333;">2.67</div>
<div class="t" style="left:660px;top:499px;width:54px;height:27px;line-height:27px;color:#2b5ca8;">3.31</div>
<div class="t" style="left:715px;top:499px;width:67px;height:27px;line-height:27px;color:#333;">2.65</div>
<div class="t" style="left:783px;top:499px;width:35px;height:27px;line-height:27px;color:#008000;">负</div>
<div class="t" style="left:819px;top:499px;width:36px;height:27px;line-height:27px;color:#008000;">输</div>
<div class="t" style="left:856px;top:499px;width:50px;height:27px;line-height:27px;color:#ff0000;">大</div>
<div class="t" style="left:0px;top:527px;width:68px;height:27px;line-height:27px;color:#fff;">英超</div>
<div class="t" style="left:69px;top:527px;width:69px;height:27px;line-height:27px;color:#333;">24-09-22</div>
<div class="t" style="left:139px;top:527px;width:117px;height:27px;line-height:27px;color:#333;"><span style="color:#008000">水晶宫</span></div>
<div class="t" style="left:257px;top:527px;width:81px;height:27px;line-height:27px;color:#333;"><span style="color:#ff0000">0-0</span>(0-0)</div>
<div class="t" style="left:339px;top:527px;width:36px;height:27px;line-height:27px;color:#333;">4-11</div>
<div class="t" style="left:376px;top:527px;width:84px;height:27px;line-height:27px;color:#333;"><span style="color:#000">曼彻斯特联</span></div>
<div class="t" style="left:461px;top:527px;width:41px;height:27px;line-height:27px;color:#333;">0.84</div>
<div class="t" style="left:503px;top:527px;width:60px;height:27px;line-height:27px;color:#1f4e9c;"><span style="color:#ff0000;font-size:15px;line-height:10px">*</span>平/半</div>
<div class="t" style="left:564px;top:527px;width:41px;height:27px;line-height:27px;color:#333;">1.05</div>
<div class="t" style="left:606px;top:527px;width:53px;height:27px;line-height:27px;color:#333;">2.82</div>
<div class="t" style="left:660px;top:527px;width:54px;height:27px;line-height:27px;color:#2b5ca8;">3.57</div>
<div class="t" style="left:715px;top:527px;width:67px;height:27px;line-height:27px;color:#333;">2.39</div>
<div class="t" style="left:783px;top:527px;width:35px;height:27px;line-height:27px;color:#0000ff;">平</div>
<div class="t" style="left:819px;top:527px;width:36px;height:27px;line-height:27px;color:#ff0000;">赢</div>
<div class="t" style="left:856px;top:527px;width:50px;height:27px;line-height:27px;color:#008000;">小</div>
<div class="t" style="left:0px;top:555px;width:68px;height:27px;line-height:27px;color:#fff;">英联杯</div>
<div class="t" style="left:69px;top:555px;width:69px;height:27px;line-height:27px;color:#333;">24-09-18</div>
<div class="t" style="left:139px;top:555px;width:117px;height:27px;line-height:27px;color:#333;"><span style="color:#000">女王公园巡游者</span></div>
<div class="t" style="left:257px;top:555px;width:81px;height:27px;line-height:27px;color:#333;"><span style="color:#ff0000">1-2</span>(0-1)</div>
<div class="t" style="left:339px;top:555px;width:36px;height:27px;line-height:27px;color:#333;">6-2</div>
<div class="t" style="left:376px;top:555px;width:84px;height:27px;line-height:27px;color:#333;"><span style="color:#008000">水晶宫</span></div>
<div class="t" style="left:461px;top:555px;width:41px;height:27px;line-height:27px;color:#333;">1.02</div>
<div class="t" style="left:503px;top:555px;width:60px;height:27px;line-height:27px;color:#1f4e9c;"><span style="color:#ff0000;font-size:15px;line-height:10px">*</span>球半</div>
<div class="t" style="left:564px;top:555px;width:41px;height:27px;line-height:27px;color:#333;">0.87</div>
<div class="t" style="left:606px;top:555px;width:53px;height:27px;line-height:27px;color:#333;">8.06</div>
<div class="t" style="left:660px;top:555px;width:54px;height:27px;line-height:27px;color:#2b5ca8;">5.01</div>
<div class="t" style="left:715px;top:555px;width:67px;height:27px;line-height:27px;color:#333;">1.35</div>
<div class="t" style="left:783px;top:555px;width:35px;height:27px;line-height:27px;color:#ff0000;">胜</div>
<div class="t" style="left:819px;top:555px;width:36px;height:27px;line-height:27px;color:#008000;">输</div>
<div class="t" style="left:856px;top:555px;width:50px;height:27px;line-height:27px;color:#0000ff;">走</div>
<div class="t" style="left:0px;top:583px;width:68px;height:27px;line-height:27px;color:#fff;">英超</div>
<div class="t" style="left:69px;top:583px;width:69px;height:27px;line-height:27px;color:#333;">24-09-14</div>
<div class="t" style="left:139px;top:583px;width:117px;height:27px;line-height:27px;color:#333;"><span style="color:#008000">水晶宫</span></div>
<div class="t" style="left:257px;top:583px;width:81px;height:27px;line-height:27px;color:#333;"><span style="color:#ff0000">2-2</span>(0-1)</div>
<div class="t" style="left:339px;top:583px;width:36px;height:27px;line-height:27px;color:#333;">5-2</div>
<div class="t" style="left:376px;top:583px;width:84px;height:27px;line-height:27px;color:#333;"><span style="color:#000">莱斯特城</span></div>
<div class="t" style="left:461px;top:583px;width:41px;height:27px;line-height:27px;color:#333;">0.87</div>
<div class="t" style="left:503px;top:583px;width:60px;height:27px;line-height:27px;color:#1f4e9c;">半/一</div>
<div class="t" style="left:564px;top:583px;width:41px;height:27px;line-height:27px;color:#333;">1.02</div>
<div class="t" style="left:606px;top:583px;width:53px;height:27px;line-height:27px;color:#333;">1.63</div>
<div class="t" style="left:660px;top:583px;width:54px;height:27px;line-height:27px;color:#2b5ca8;">4.01</div>
<div class="t" style="left:715px;top:583px;width:67px;height:27px;line-height:27px;color:#333;">5.29</div>
<div class="t" style="left:783px;top:583px;width:35px;height:27px;line-height:27px;color:#0000ff;">平</div>
<div class="t" style="left:819px;top:583px;width:36px;height:27px;line-height:27px;color:#008000;">输</div>
<div class="t" style="left:856px;top:583px;width:50px;height:27px;line-height:27px;color:#ff0000;">大</div>
<div class="t" style="left:0px;top:611px;width:68px;height:27px;line-height:27px;color:#fff;">英超</div>
<div class="t" style="left:69px;top:611px;width:69px;height:27px;line-height:27px;color:#333;">24-09-01</div>
<div class="t" style="left:139px;top:611px;width:117px;height:27px;line-height:27px;color:#333;"><span style="color:#000">切尔西</span></div>
<div class="t" style="left:257px;top:611px;width:81px;height:27px;line-height:27px;color:#333;"><span style="color:#ff0000">1-1</span>(1-0)</div>
<div class="t" style="left:339px;top:611px;width:36px;height:27px;line-height:27px;color:#333;">4-4</div>
<div class="t" style="left:376px;top:611px;width:84px;height:27px;line-height:27px;color:#333;"><span style="color:#008000">水晶宫</span></div>
<div class="t" style="left:461px;top:611px;width:41px;height:27px;line-height:27px;color:#333;">0.81</div>
<div class="t" style="left:503px;top:611px;width:60px;height:27px;line-height:27px;color:#1f4e9c;">半/一</div>
<div class="t" style="left:564px;top:611px;width:41px;height:27px;line-height:27px;color:#333;">1.08</div>
<div class="t" style="left:606px;top:611px;width:53px;height:27px;line-height:27px;color:#333;">1.64</div>
<div class="t" style="left:660px;top:611px;width:54px;height:27px;line-height:27px;color:#2b5ca8;">4.26</div>
<div class="t" style="left:715px;top:611px;width:67px;height:27px;line-height:27px;color:#333;">4.84</div>
<div class="t" style="left:783px;top:611px;width:35px;height:27px;line-height:27px;color:#0000ff;">平</div>
<div class="t" style="left:819px;top:611px;width:36px;height:27px;line-height:27px;color:#ff0000;">赢</div>
<div class="t" style="left:856px;top:611px;width:50px;height:27px;line-height:27px;color:#008000;">小</div>
<div class="t" style="left:0px;top:639px;width:68px;height:27px;line-height:27px;color:#fff;">英联杯</div>
<div class="t" style="left:69px;top:639px;width:69px;height:27px;line-height:27px;color:#333;">24-08-28</div>
<div class="t" style="left:139px;top:639px;width:117px;height:27px;line-height:27px;color:#333;"><span style="color:#008000">水晶宫</span></div>
<div class="t" style="left:257px;top:639px;width:81px;height:27px;line-height:27px;color:#333;"><span style="color:#ff0000">4-0</span>(1-0)</div>
<div class="t" style="left:339px;top:639px;width:36px;height:27px;line-height:27px;color:#333;">4-0</div>
<div class="t" style="left:376px;top:639px;width:84px;height:27px;line-height:27px;color:#333;"><span style="color:#000">诺维奇</span></div>
<div class="t" style="left:461px;top:639px;width:41px;height:27px;line-height:27px;color:#333;">0.84</div>
<div class="t" style="left:503px;top:639px;width:60px;height:27px;line-height:27px;color:#1f4e9c;">两球</div>
<div class="t" style="left:564px;top:639px;width:41px;height:27px;line-height:27px;color:#333;">0.98</div>
<div class="t" style="left:606px;top:639px;width:53px;height:27px;line-height:27px;color:#333;">1.20</div>
<div class="t" style="left:660px;top:639px;width:54px;height:27px;line-height:27px;color:#2b5ca8;">6.73</div>
<div class="t" style="left:715px;top:639px;width:67px;height:27px;line-height:27px;color:#333;">12.68</div>
<div class="t" style="left:783px;top:639px;width:35px;height:27px;line-height:27px;color:#ff0000;">胜</div>
<div class="t" style="left:819px;top:639px;width:36px;height:27px;line-height:27px;color:#ff0000;">赢</div>
<div class="t" style="left:856px;top:639px;width:50px;height:27px;line-height:27px;color:#ff0000;">大</div>
<div class="t" style="left:0px;top:667px;width:68px;height:27px;line-height:27px;color:#fff;">英超</div>
<div class="t" style="left:69px;top:667px;width:69px;height:27px;line-height:27px;color:#333;">24-08-24</div>
<div class="t" style="left:139px;top:667px;width:117px;height:27px;line-height:27px;color:#333;"><span style="color:#008000">水晶宫</span></div>
<div class="t" style="left:257px;top:667px;width:81px;height:27px;line-height:27px;color:#333;"><span style="color:#ff0000">0-2</span>(0-0)</div>
<div class="t" style="left:339px;top:667px;width:36px;height:27px;line-height:27px;color:#333;">3-3</div>
<div class="t" style="left:376px;top:667px;width:84px;height:27px;line-height:27px;color:#333;"><span style="color:#000">西汉姆联</span></div>
<div class="t" style="left:461px;top:667px;width:41px;height:27px;line-height:27px;color:#333;">0.96</div>
<div class="t" style="left:503px;top:667px;width:60px;height:27px;line-height:27px;color:#1f4e9c;">半球</div>
<div class="t" style="left:564px;top:667px;width:41px;height:27px;line-height:27px;color:#333;">0.93</div>
<div class="t" style="left:606px;top:667px;width:53px;height:27px;line-height:27px;color:#333;">1.97</div>
<div class="t" style="left:660px;top:667px;width:54px;height:27px;line-height:27px;color:#2b5ca8;">3.69</div>
<div class="t" style="left:715px;top:667px;width:67px;height:27px;line-height:27px;color:#333;">3.65</div>
<div class="t" style="left:783px;top:667px;width:35px;height:27px;line-height:27px;color:#008000;">负</div>
<div class="t" style="left:819px;top:667px;width:36px;height:27px;line-height:27px;color:#008000;">输</div>
<div class="t" style="left:856px;top:667px;width:50px;height:27px;line-height:27px;color:#008000;">小</div>
<div class="t" style="left:0px;top:695px;width:68px;height:27px;line-height:27px;color:#fff;">英超</div>
<div class="t" style="left:69px;top:695px;width:69px;height:27px;line-height:27px;color:#333;">24-08-18</div>
<div class="t" style="left:139px;top:695px;width:117px;height:27px;line-height:27px;color:#333;"><span style="color:#000">布伦特福德</span></div>
<div class="t" style="left:257px;top:695px;width:81px;height:27px;line-height:27px;color:#333;"><span style="color:#ff0000">2-1</span>(1-0)</div>
<div class="t" style="left:339px;top:695px;width:36px;height:27px;line-height:27px;color:#333;">4-7</div>
<div class="t" style="left:376px;top:695px;width:84px;height:27px;line-height:27px;color:#333;"><span style="color:#008000">水晶宫</span></div>
<div class="t" style="left:461px;top:695px;width:41px;height:27px;line-height:27px;color:#333;">1.06</div>
<div class="t" style="left:503px;top:695px;width:60px;height:27px;line-height:27px;color:#1f4e9c;">平手</div>
<div class="t" style="left:564px;top:695px;width:41px;height:27px;line-height:27px;color:#333;">0.83</div>
<div class="t" style="left:606px;top:695px;width:53px;height:27px;line-height:27px;color:#333;">2.72</div>
<div class="t" style="left:660px;top:695px;width:54px;height:27px;line-height:27px;color:#2b5ca8;">3.28</div>
<div class="t" style="left:715px;top:695px;width:67px;height:27px;line-height:27px;color:#333;">2.63</div>
<div class="t" style="left:783px;top:695px;width:35px;height:27px;line-height:27px;color:#008000;">负</div>
<div class="t" style="left:819px;top:695px;width:36px;height:27px;line-height:27px;color:#008000;">输</div>
<div class="t" style="left:856px;top:695px;width:50px;height:27px;line-height:27px;color:#ff0000;">大</div>
<div class="t" style="left:0px;top:723px;width:68px;height:27px;line-height:27px;color:#fff;">球会友谊</div>
<div class="t" style="left:69px;top:723px;width:69px;height:27px;line-height:27px;color:#333;">24-08-11</div>
<div class="t" style="left:139px;top:723px;width:117px;height:27px;line-height:27px;color:#333;"><span style="color:#008000">水晶宫</span></div>
<div class="t" style="left:257px;top:723px;width:81px;height:27px;line-height:27px;color:#333;"><span style="color:#ff0000">1-1</span>(0-1)</div>
<div class="t" style="left:339px;top:723px;width:36px;height:27px;line-height:27px;color:#333;">2-4</div>
<div class="t" style="left:376px;top:723px;width:84px;height:27px;line-height:27px;color:#333;"><span style="color:#000">南特</span></div>
<div class="t" style="left:461px;top:723px;width:41px;height:27px;line-height:27px;color:#333;">0.85</div>
<div class="t" style="left:503px;top:723px;width:60px;height:27px;line-height:27px;color:#1f4e9c;">一球</div>
<div class="t" style="left:564px;top:723px;width:41px;height:27px;line-height:27px;color:#333;">0.97</div>
<div class="t" style="left:606px;top:723px;width:53px;height:27px;line-height:27px;color:#333;">1.57</div>
<div class="t" style="left:660px;top:723px;width:54px;height:27px;line-height:27px;color:#2b5ca8;">4.00</div>
<div class="t" style="left:715px;top:723px;width:67px;height:27px;line-height:27px;color:#333;">4.90</div>
<div class="t" style="left:783px;top:723px;width:35px;height:27px;line-height:27px;color:#0000ff;">平</div>
<div class="t" style="left:819px;top:723px;width:36px;height:27px;line-height:27px;color:#008000;">输</div>
<div class="t" style="left:856px;top:723px;width:50px;height:27px;line-height:27px;color:#008000;">小</div>
<div class="sel" style="left:481px;top:429px;width:58px;height:18px;line-height:18px;font-size:13px;"><span class="lab">Crow*</span><svg class="chev" width="10" height="7" viewBox="0 0 10 7"><path d="M1.2 1.3 L5 5.1 L8.8 1.3" stroke="#000" stroke-width="2" fill="none"/></svg></div>
<div class="sel" style="left:549px;top:429px;width:34px;height:18px;line-height:18px;font-size:12px;"><span class="lab">终</span><svg class="chev" width="10" height="7" viewBox="0 0 10 7"><path d="M1.2 1.3 L5 5.1 L8.8 1.3" stroke="#000" stroke-width="2" fill="none"/></svg></div>
<div class="sel" style="left:630px;top:429px;width:82px;height:18px;line-height:18px;font-size:12px;"><span class="lab">胜平负均值</span><svg class="chev" width="10" height="7" viewBox="0 0 10 7"><path d="M1.2 1.3 L5 5.1 L8.8 1.3" stroke="#000" stroke-width="2" fill="none"/></svg></div>
<div class="sel" style="left:722px;top:429px;width:34px;height:18px;line-height:18px;font-size:12px;"><span class="lab">终</span><svg class="chev" width="10" height="7" viewBox="0 0 10 7"><path d="M1.2 1.3 L5 5.1 L8.8 1.3" stroke="#000" stroke-width="2" fill="none"/></svg></div>
<div class="sel" style="left:821px;top:429px;width:46px;height:18px;line-height:18px;font-size:12px;"><span class="lab">全场</span><svg class="chev" width="10" height="7" viewBox="0 0 10 7"><path d="M1.2 1.3 L5 5.1 L8.8 1.3" stroke="#000" stroke-width="2" fill="none"/></svg></div>
<div style="left:418px;top:753px;width:35px;height:1px;background:#007800;"></div>
<div style="left:485px;top:753px;width:35px;height:1px;background:#007800;"></div>
</body></html>
